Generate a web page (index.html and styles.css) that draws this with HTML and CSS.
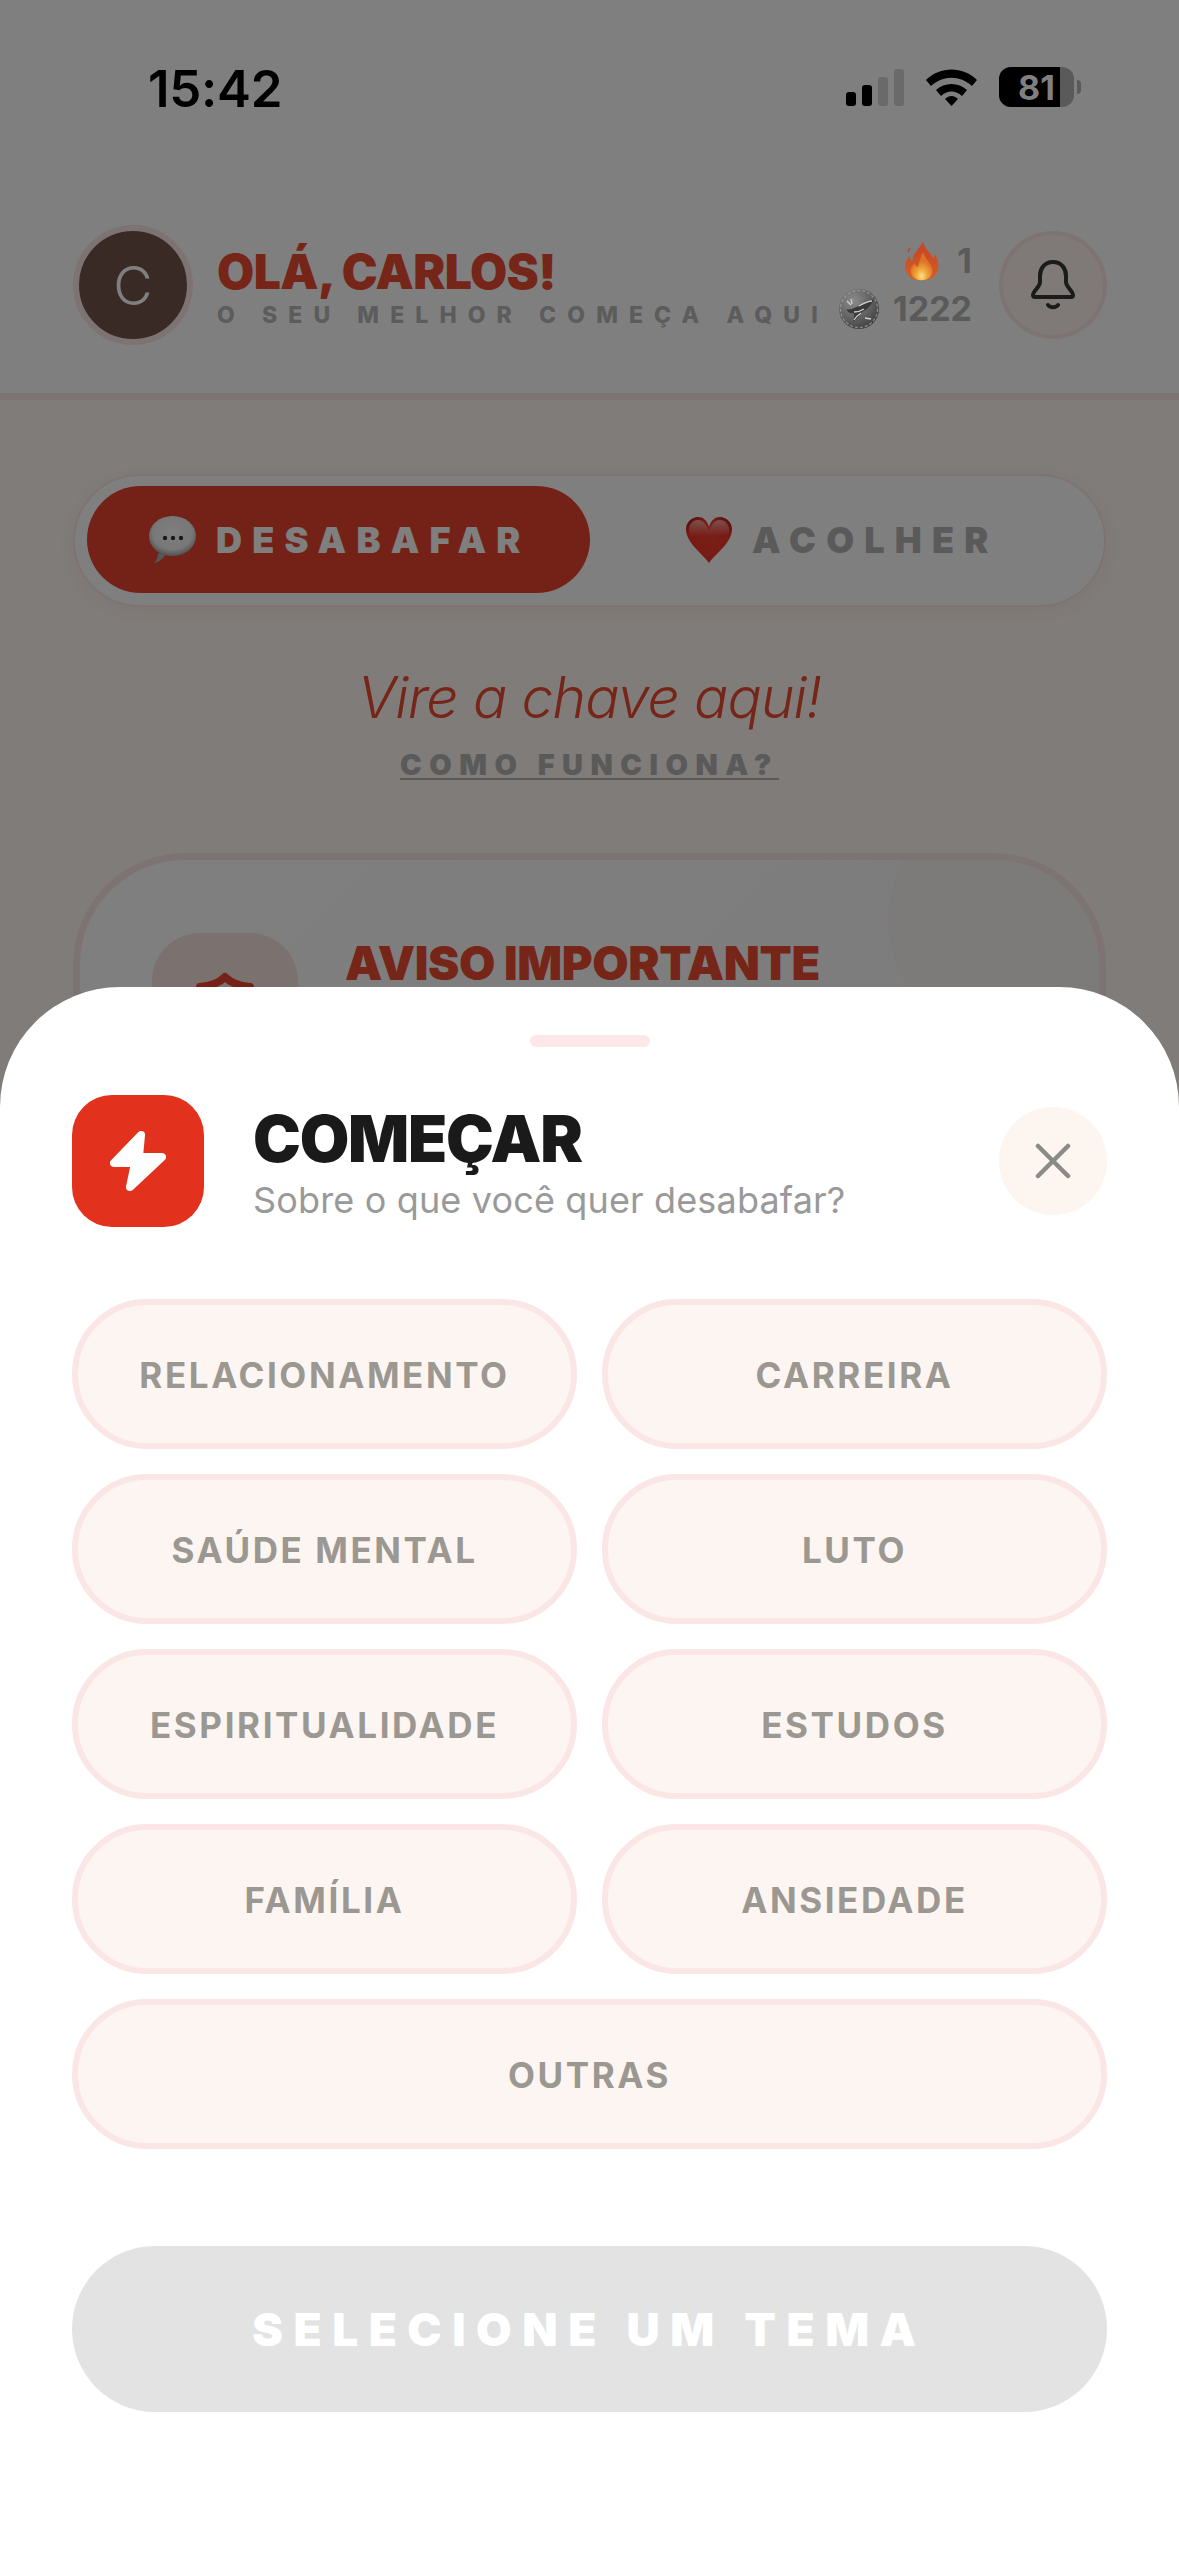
FILE: index.html
```html
<!DOCTYPE html>
<html lang="pt-BR">

<head>
    <meta charset="UTF-8">
    <meta name="viewport" content="width=device-width, initial-scale=1.0">
    <title>Começar</title>
    <link rel="stylesheet" href="styles.css">
</head>

<body>
    <div class="phone">
        <div class="topbar">
            <div class="status-bar">
                <span class="clock">15:42</span>
                <div class="status-icons">
                    <svg class="signal" width="58" height="37" viewBox="0 0 58 37">
                        <rect x="0" y="23" width="10" height="14" rx="3" fill="#000" />
                        <rect x="16" y="16" width="10" height="21" rx="3" fill="#000" />
                        <rect x="32" y="8" width="10" height="29" rx="3" fill="#6a6a6a" />
                        <rect x="48" y="0" width="10" height="37" rx="3" fill="#6a6a6a" />
                    </svg>
                    <svg class="wifi" width="51" height="37" viewBox="0 0 51 37">
                        <path d="M0 11 C14 -3 37 -3 51 11 L46 17 C34 6 17 6 5 17 Z" fill="#000" />
                        <path d="M10 21 C18 13 33 13 41 21 L36 27 C30 21 21 21 15 27 Z" fill="#000" />
                        <path d="M19 30 C23 26 28 26 32 30 L25.500 37 Z" fill="#000" />
                    </svg>
                    <div class="battery">
                        <div class="battery-body">
                            <div class="battery-fill"></div>
                            <span class="battery-num">81</span>
                        </div>
                        <div class="battery-nub"></div>
                    </div>
                </div>
            </div>
            <div class="header">
                <div class="avatar"><span>C</span></div>
                <div class="greeting">
                    <div class="greeting-title">OLÁ, CARLOS!</div>
                    <div class="greeting-sub">O SEU MELHOR COMEÇA AQUI</div>
                </div>
                <div class="stats">
                    <div class="stat-row stat-fire">
                        <svg class="emoji-icon" width="34" height="40" viewBox="0 0 36 41">
                            <defs>
                                <linearGradient id="flame" x1="0" y1="0" x2="0" y2="1">
                                    <stop offset="0" stop-color="#c4432a" />
                                    <stop offset="1" stop-color="#d4601f" />
                                </linearGradient>
                                <radialGradient id="flame-core" cx="0.5" cy="0.85" r="0.55">
                                    <stop offset="0" stop-color="#fbe08a" />
                                    <stop offset="0.45" stop-color="#efa83a" />
                                    <stop offset="1" stop-color="#dd7228" />
                                </radialGradient>
                            </defs>
                            <path d="M19 0 C21 8 27 11 30 18 C31 16 31 15 31 13 C36 19 37 28 33 34 C30 39 24 41 18 41 C10 41 3 38 1 31 C-1 25 1 20 5 15 C5 18 6 20 8 21 C7 13 15 8 19 0 Z" fill="url(#flame)" />
                            <path d="M3 10 C3 8 4 7 6 6 C6 8 5 10 3 12 Z" fill="#c4432a" />
                            <path d="M19 11 C21 19 30 24 29 32 C28 38 23 41 18 41 C12 41 6 37 6 31 C6 27 8 25 10 23 C11 25 12 26 14 27 C14 22 17 17 19 11 Z" fill="url(#flame-core)" />
                        </svg>
                        <span>1</span>
                    </div>
                    <div class="stat-row stat-coins">
                        <svg class="emoji-icon" width="40" height="40" viewBox="0 0 40 40">
                            <defs>
                                <radialGradient id="coin" cx="0.35" cy="0.3" r="0.8">
                                    <stop offset="0" stop-color="#8c8c8c" />
                                    <stop offset="0.6" stop-color="#5e5e5e" />
                                    <stop offset="1" stop-color="#3a3a3a" />
                                </radialGradient>
                            </defs>
                            <circle cx="20" cy="20" r="20" fill="url(#coin)" />
                            <circle cx="20" cy="20" r="18.500" fill="none" stroke="#a8a8a8" stroke-width="1.200" stroke-dasharray="3 2" opacity="0.7" />
                            <path d="M7 20 C12 22 16 18 20 17 C25 12 30 10 35 11 C32 16 28 21 23 23 C21 27 17 30 14 33 C15 29 16 26 14 24 C11 25 9 23 7 20 Z" fill="#3a3a3a" />
                            <path d="M20 17 C25 14 29 12 33 12 M15 23 C19 23 22 22 25 20 M15 31 C17 28 19 26 22 24 M8 12 L12 16 M12 10 L13 15 M26 29 L32 30" stroke="#cfcfcf" stroke-width="1.300" fill="none" />
                        </svg>
                        <span>1222</span>
                    </div>
                </div>
                <div class="bell">
                    <svg width="44" height="50" viewBox="0 0 44 50" fill="none" stroke="#363636" stroke-width="4" stroke-linecap="round" stroke-linejoin="round">
                        <path d="M22 2 C13 2 9 9 9 16 V22 C9 27 2 31 2 35 C2 37 3 37 4 37 H40 C41 37 42 37 42 35 C42 31 35 27 35 22 V16 C35 9 31 2 22 2 Z" />
                        <path d="M17 45 C19 48 25 48 27 45" />
                    </svg>
                </div>
            </div>
        </div>

        <div class="content">
            <div class="mode-toggle">
                <div class="mode mode-active">
                    <svg width="47" height="47" viewBox="0 0 47 47">
                        <defs>
                            <radialGradient id="bubble" cx="0.5" cy="0.42" r="0.6">
                                <stop offset="0" stop-color="#ffffff" />
                                <stop offset="0.7" stop-color="#f0f0f0" />
                                <stop offset="1" stop-color="#9a9a9a" />
                            </radialGradient>
                        </defs>
                        <path d="M5 47 C8 44 9 41 9 37 L17 38 C14 43 10 46 5 47 Z" fill="#aaa" />
                        <ellipse cx="23.500" cy="20" rx="23.500" ry="20" fill="url(#bubble)" />
                        <circle cx="16" cy="22" r="2.200" fill="#333" />
                        <circle cx="24" cy="22" r="2.200" fill="#333" />
                        <circle cx="32" cy="22" r="2.200" fill="#333" />
                    </svg>
                    <span>DESABAFAR</span>
                </div>
                <div class="mode">
                    <svg width="46" height="46" viewBox="0 0 46 46">
                        <defs>
                            <radialGradient id="heart" cx="0.5" cy="0.5" r="0.62">
                                <stop offset="0" stop-color="#f43c30" />
                                <stop offset="0.75" stop-color="#ee3529" />
                                <stop offset="1" stop-color="#a81c14" />
                            </radialGradient>
                            <linearGradient id="heart-gloss" x1="0" y1="0" x2="0" y2="1">
                                <stop offset="0" stop-color="#ffffff" stop-opacity="0.55" />
                                <stop offset="1" stop-color="#ffffff" stop-opacity="0" />
                            </linearGradient>
                        </defs>
                        <path d="M23 46 C16 36 0 26 0 12 C0 5 6 0 12 0 C17 0 21 3 23 10 C25 3 29 0 34 0 C40 0 46 5 46 12 C46 26 30 36 23 46 Z" fill="url(#heart)" />
                        <path d="M3 13 C3 7 7 3 12 3 C17 3 20 7 23 13 C26 7 29 3 34 3 C39 3 43 7 43 13 C43 15 42 17 41 19 H5 C4 17 3 15 3 13 Z" fill="url(#heart-gloss)" />
                    </svg>
                    <span>ACOLHER</span>
                </div>
            </div>

            <div class="tagline">Vire a chave aqui!</div>
            <div class="how-link">COMO FUNCIONA?</div>

            <div class="notice">
                <div class="notice-circle"></div>
                <div class="notice-icon">
                    <svg width="60" height="68" viewBox="0 0 60 68" fill="none" stroke="#e8452f" stroke-width="8" stroke-linejoin="round">
                        <path d="M30 5 C36 11 44 14 55 15 V42 L30 63 L5 42 V15 C16 14 24 11 30 5 Z" />
                    </svg>
                </div>
                <div class="notice-title">AVISO IMPORTANTE</div>
            </div>
        </div>

        <div class="overlay"></div>

        <div class="sheet">
            <div class="sheet-handle"></div>
            <div class="sheet-head">
                <div class="sheet-logo">
                    <svg width="56" height="62" viewBox="0 0 56 62" fill="#fff" stroke="#fff" stroke-width="8" stroke-linejoin="round">
                        <path d="M31 5 L4 33 H25 L20 57 L52 27 H29 Z" />
                    </svg>
                </div>
                <div class="sheet-titles">
                    <h1>COMEÇAR</h1>
                    <p>Sobre o que você quer desabafar?</p>
                </div>
                <div class="sheet-close">
                    <svg width="36" height="36" viewBox="0 0 36 36" stroke="#8a8a86" stroke-width="4.500" stroke-linecap="round">
                        <path d="M3 3 L33 33 M33 3 L3 33" />
                    </svg>
                </div>
            </div>

            <div class="topics">
                <div class="topic">RELACIONAMENTO</div>
                <div class="topic">CARREIRA</div>
                <div class="topic">SAÚDE MENTAL</div>
                <div class="topic">LUTO</div>
                <div class="topic">ESPIRITUALIDADE</div>
                <div class="topic">ESTUDOS</div>
                <div class="topic">FAMÍLIA</div>
                <div class="topic">ANSIEDADE</div>
                <div class="topic topic-wide">OUTRAS</div>
            </div>

            <div class="submit">SELECIONE UM TEMA</div>
        </div>
    </div>
</body>

</html>
```

FILE: styles.css
```css
* {
    box-sizing: border-box;
}

body {
    margin: 0;
    font-family: Inter, "Liberation Sans", sans-serif;
}

.phone {
    position: relative;
    width: 1179px;
    height: 2556px;
    overflow: hidden;
    background: #fff8f3;
}

/* top of the page, behind the dimmed overlay */
.topbar {
    height: 400px;
    background: #fff;
    border-bottom: 7px solid #fde6e6;
}

.status-bar {
    height: 174px;
    padding: 68px 98px 0 148px;
    display: flex;
    justify-content: space-between;
    align-items: flex-start;
}

.clock {
    position: relative;
    z-index: 3;
    font-size: 51px;
    line-height: 42px;
    font-weight: 600;
    color: #000;
    letter-spacing: -0.3px;
}

.status-icons {
    position: relative;
    z-index: 3;
    display: flex;
    align-items: flex-start;
    gap: 22px;
    padding-top: 1px;
}

.battery {
    display: flex;
    align-items: center;
    gap: 3px;
    margin-top: -2px;
}

.battery-body {
    position: relative;
    width: 75px;
    height: 40px;
    border-radius: 12px;
    overflow: hidden;
    background: #5a5a5a;
    display: flex;
    align-items: center;
    justify-content: center;
}

.battery-fill {
    position: absolute;
    left: 0;
    top: 0;
    bottom: 0;
    width: 61px;
    background: #000;
}

.battery-num {
    position: relative;
    font-size: 34px;
    font-weight: 700;
    color: #808080;
}

.battery-nub {
    width: 4px;
    height: 14px;
    border-radius: 0 4px 4px 0;
    background: #5a5a5a;
}

.header {
    display: flex;
    align-items: center;
    padding: 51px 72px 0 73px;
}

.avatar {
    width: 120px;
    height: 120px;
    flex: none;
    border-radius: 50%;
    background: #75544c;
    border: 6px solid #fde6e6;
    display: flex;
    align-items: center;
    justify-content: center;
    color: #fff;
    font-size: 54px;
    font-weight: 300;
}

.greeting {
    margin-left: 24px;
    flex: 1;
    min-width: 0;
}

.greeting-title {
    font-size: 48px;
    line-height: 50px;
    font-weight: 900;
    letter-spacing: -0.5px;
    color: #ec4a33;
    padding-top: 5px;
}

.greeting-sub {
    margin-top: 4px;
    font-size: 23px;
    line-height: 28px;
    font-weight: 800;
    letter-spacing: 11.100px;
    color: #b8b8b8;
    white-space: nowrap;
}

.stats {
    display: flex;
    flex-direction: column;
    align-items: flex-end;
    gap: 8px;
    margin-right: 27px;
    color: #b4b4b4;
    font-size: 34px;
    font-weight: 700;
    line-height: 40px;
}

.stat-row {
    display: flex;
    align-items: center;
}

.stat-fire {
    gap: 18px;
}

.stat-coins {
    gap: 14px;
}

/* these keep their colour through the overlay */
.emoji-icon {
    position: relative;
    z-index: 3;
}

.bell {
    width: 108px;
    height: 108px;
    flex: none;
    border-radius: 50%;
    background: #fff2ee;
    border: 4px solid #fde6e6;
    display: flex;
    align-items: center;
    justify-content: center;
}

.content {
    padding: 74px 73px 0;
}

.mode-toggle {
    display: flex;
    gap: 0;
    height: 133px;
    padding: 10px 12px 12px;
    border-radius: 67px;
    background: #fff;
    border: 2px solid #fde6e6;
    box-shadow: 0 4px 16px rgba(232, 69, 47, 0.06);
}

.mode {
    flex: 1;
    display: flex;
    align-items: center;
    justify-content: center;
    gap: 20px;
    padding-left: 3px;
    border-radius: 54px;
    font-size: 36px;
    font-weight: 900;
    letter-spacing: 10.200px;
    color: #b4b4b4;
}

.mode-active {
    background: #e8452f;
    color: #fff;
}

.tagline {
    margin-top: 56px;
    text-align: center;
    font-size: 57px;
    line-height: 70px;
    font-weight: 300;
    font-style: italic;
    letter-spacing: -0.9px;
    color: #ec4a33;
}

.how-link {
    margin-top: 14px;
    text-align: center;
    font-size: 29px;
    line-height: 36px;
    font-weight: 900;
    letter-spacing: 7.500px;
    color: #b4b4b4;
    text-decoration: underline;
    text-underline-offset: 3px;
}

.notice {
    position: relative;
    margin-top: 70px;
    height: 400px;
    padding: 73px 72px 0;
    border-radius: 112px;
    border: 7px solid #fde6e6;
    background: linear-gradient(135deg, #fff, #f8f8f8);
    overflow: hidden;
    display: flex;
    align-items: flex-start;
    gap: 47px;
}

.notice-circle {
    position: absolute;
    left: 808px;
    top: -70px;
    width: 260px;
    height: 260px;
    border-radius: 50%;
    background: #fbf5f4;
}

.notice-icon {
    position: relative;
    width: 146px;
    height: 146px;
    flex: none;
    border-radius: 48px;
    background: #f6e4e0;
    display: flex;
    align-items: center;
    justify-content: center;
}

.notice-title {
    position: relative;
    font-size: 47px;
    line-height: 50px;
    font-weight: 900;
    letter-spacing: -0.400px;
    color: #ec4a33;
    padding-top: 5px;
}

.overlay {
    position: absolute;
    inset: 0;
    background: rgba(0, 0, 0, 0.5);
}

.sheet {
    position: absolute;
    left: 0;
    right: 0;
    bottom: 0;
    height: 1569px;
    padding: 48px 72px 0;
    background: #fff;
    border-radius: 120px 120px 0 0;
}

.sheet-handle {
    width: 120px;
    height: 12px;
    margin: 0 auto;
    border-radius: 6px;
    background: #fce8e8;
}

.sheet-head {
    margin-top: 48px;
    display: flex;
    align-items: center;
}

.sheet-logo {
    width: 132px;
    height: 132px;
    flex: none;
    border-radius: 40px;
    background: #e2311d;
    display: flex;
    align-items: center;
    justify-content: center;
}

.sheet-titles {
    flex: 1;
    margin-left: 49px;
    padding-top: 4px;
}

.sheet-titles h1 {
    margin: 0;
    font-size: 64px;
    line-height: 70px;
    font-weight: 900;
    letter-spacing: -1.200px;
    color: #1a1a1a;
}

.sheet-titles p {
    margin: 4px 0 0;
    font-size: 36px;
    line-height: 44px;
    letter-spacing: 0.150px;
    color: #999;
}

.sheet-close {
    width: 108px;
    height: 108px;
    flex: none;
    border-radius: 50%;
    background: #fdf5f0;
    display: flex;
    align-items: center;
    justify-content: center;
}

.topics {
    margin-top: 72px;
    display: grid;
    grid-template-columns: 1fr 1fr;
    gap: 25px;
}

.topic {
    height: 150px;
    padding-top: 2px;
    border-radius: 75px;
    border: 6px solid #fbe6e6;
    background: #fdf5f1;
    display: flex;
    align-items: center;
    justify-content: center;
    font-size: 35px;
    font-weight: 700;
    letter-spacing: 2.600px;
    color: #9b9791;
}

.topic-wide {
    grid-column: 1 / 3;
}

.submit {
    margin-top: 97px;
    height: 166px;
    border-radius: 83px;
    background: #e3e3e3;
    display: flex;
    align-items: center;
    justify-content: center;
    font-size: 46px;
    font-weight: 900;
    letter-spacing: 10.500px;
    color: #fff;
}
```
